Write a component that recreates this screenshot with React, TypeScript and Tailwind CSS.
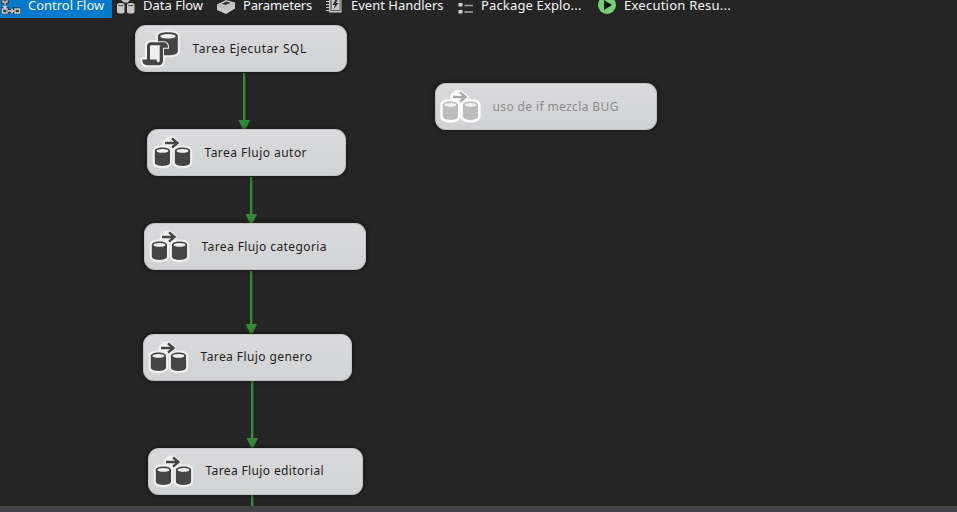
import type { ReactNode } from "react";

function Cylinder({ x, y, body }: { x: number; y: number; body: string }) {
  return (
    <g transform={`translate(${x} ${y})`}>
      <path d="M0 3.2C0 1.4 3 0 7.6 0s7.6 1.4 7.6 3.2v12c0 1.9-3 3.4-7.6 3.4S0 17.1 0 15.2z" fill={body} />
      <ellipse cx="7.6" cy="3.5" rx="5.9" ry="1.9" fill="#f1f1f2" />
    </g>
  );
}

function FlowIcon({ disabled }: { disabled?: boolean }) {
  const body = disabled ? "#bdbdbe" : "#454545";
  const halo = disabled ? "#ffffff" : "#f0f0f1";
  return (
    <svg width="48" height="47" viewBox="0 0 48 47" className="shrink-0">
      <g fill={halo} stroke={halo} strokeWidth={disabled ? 4.8 : 4.2} strokeLinejoin="round">
        <path d="M7.800 21.500c0-1.800 3-3 7.600-3s7.600 1.200 7.600 3v12.300c0 2-3.500 3.300-7.600 3.300s-7.600-1.300-7.600-3.300z" />
        <path d="M27.900 21.500c0-1.800 3-3 7.600-3s7.600 1.200 7.600 3v12.300c0 2-3.500 3.300-7.600 3.300s-7.600-1.300-7.600-3.300z" />
        <path d="M18 12.500h5l-2-3h4l6 4.800-5.500 4.700h-4l-4-3z" />
      </g>
      <Cylinder x={7.8} y={18.4} body={body} />
      <Cylinder x={27.9} y={18.4} body={body} />
      <path d="M18 14h12.500M25 9.300l5.500 4.700-5.500 4.700" fill="none" stroke={disabled ? "#aaaaab" : "#454545"} strokeWidth="2.400" />
    </svg>
  );
}

function SqlIcon() {
  const roll = "M12 34.500V21.500c0-2.800 1.600-4.300 4.200-4.300h13c2.500 0 3.800 1.800 3.800 5.600h-5V35.500c0 3-1.600 4.700-4.400 4.700H12.500c-3.500 0-5.200-2-5.200-5.700z";
  return (
    <svg width="48" height="47" viewBox="0 0 48 47" className="shrink-0">
      <g fill="#f0f0f1" stroke="#f0f0f1" strokeWidth="4.200" strokeLinejoin="round">
        <path d="M23 11c0-2.400 4-3.700 9.900-3.700s9.900 1.300 9.900 3.700v15.500c0 2.400-4 3.700-9.900 3.700H23z" />
        <path d={roll} />
      </g>
      <path d="M23 11c0-2.400 4-3.700 9.900-3.700s9.900 1.300 9.900 3.700v15.500c0 2.400-4 3.700-9.900 3.700H23z" fill="#454545" />
      <ellipse cx="32.900" cy="11.300" rx="7.700" ry="2.300" fill="#f1f1f2" />
      <path d={roll} fill="none" stroke="#f0f0f1" strokeWidth="2" />
      <path d={roll} fill="#454545" />
      <path d="M15 34.500V22c0-1.100.6-1.700 1.600-1.700h8.800c-.5.700-.7 1.500-.7 2.500v12.500c0 1.300-.5 2-1.500 2s-1.500-1-1.500-2.800z" fill="#f0f0f1" />
    </svg>
  );
}

interface TaskProps {
  label: string;
  place: string;
  tracking: string;
  icon?: ReactNode;
  disabled?: boolean;
}

function Task({ label, place, tracking, icon, disabled }: TaskProps) {
  return (
    <div
      className={`absolute flex h-[47px] items-center rounded-[11px] bg-linear-to-b from-[#dadadd] to-[#d0d2d4] shadow-[0_0_4px_1px_rgba(0,0,0,0.4),inset_0_0_0_1px_rgba(150,150,155,0.3)] ${place}`}
    >
      {icon ?? <FlowIcon disabled={disabled} />}
      <span className={`ml-[9.500px] whitespace-nowrap text-[12px] leading-4 ${tracking} ${disabled ? "text-[#8c8c8e]" : "text-[#1e1e1e]"}`}>
        {label}
      </span>
    </div>
  );
}

const links = [
  { x: 244, from: 73, to: 129.5 },
  { x: 251, from: 177, to: 223.5 },
  { x: 251, from: 271, to: 333.5 },
  { x: 252, from: 381, to: 447.5 },
];

function Tab({ width, icon, label, active, tracking }: { width: string; icon: ReactNode; label: string; active?: boolean; tracking: string }) {
  return (
    <div className={`flex h-[18px] shrink-0 items-start ${width} ${active ? "bg-[#007acc]" : ""}`}>
      <span className="w-7 shrink-0">{icon}</span>
      <span className={`whitespace-nowrap text-[13px] leading-[10px] text-[#f4f4f4] ${tracking}`}>{label}</span>
    </div>
  );
}

function TabIcon({ children }: { children: ReactNode }) {
  return <svg width="28" height="18" viewBox="0 0 28 18">{children}</svg>;
}

export default function App() {
  return (
    <main className="flex h-[512px] w-[957px] flex-col overflow-hidden bg-[#252525] font-['Noto_Sans',sans-serif]">
      <nav className="flex h-[18px] shrink-0">
        <Tab width="mr-[3px] w-[112px]" active label="Control Flow" tracking="tracking-[-0.02px]" icon={
          <TabIcon>
            <g fill="none" stroke="#333b42" strokeWidth="3.400"><path d="M3-1h4v3H3zM3 9h4v3.500H3zM14.500 9h4v3.500h-4zM5 2v7M7 11h7" /></g>
            <g fill="none" stroke="#cdcdcd" strokeWidth="1.300"><path d="M3-1h4v3H3zM2.500 9H7v4H2.500zM15 9h4.500v4H15zM5 3v5M3 6l2 2 2-2M8 11h6M11.500 9l2 2-2 2" /></g>
          </TabIcon>
        } />
        <Tab width="w-[100px]" label="Data Flow" tracking="tracking-[0px]" icon={
          <TabIcon>
            <g fill="#c6c6c6">
              <path d="M2 4.500C2 2.500 9.500 2.500 9.500 4.500V12c0 2-7.500 2-7.500 0zM12 4.500c0-2 7.500-2 7.500 0V12c0 2-7.500 2-7.500 0z" />
              <path d="M6 0h9l-3 3-1-1-1 1z" />
            </g>
            <path d="M3.200 5c1 .9 4 .9 5 0M13.200 5c1 .9 4 .9 5 0" fill="none" stroke="#343434" />
          </TabIcon>
        } />
        <Tab width="w-[108px]" label="Parameters" tracking="tracking-[-0.15px]" icon={
          <TabIcon>
            <path d="M2 4.500L11 0l9 2.500v6l-9 5.500-9-4z" fill="#c8c8c8" />
            <path d="M6.500 3.700l5-2.200 4 1.300-5 2.200z" fill="#333" />
            <path d="M2.500 5l7.500 3 9.500-5" fill="none" stroke="#aaa" strokeWidth=".8" />
          </TabIcon>
        } />
        <Tab width="w-[130px]" label="Event Handlers" tracking="tracking-[0px]" icon={
          <TabIcon>
            <path d="M6-1h12.500v13.500H6z" fill="#c8c8c8" />
            <path d="M3 1.500h4M3 4.500h4M3 7.500h4M3 10.500h4" stroke="#c8c8c8" strokeWidth="1.200" />
            <path d="M8 0v11" stroke="#333" />
            <path d="M9 10.500h8V0" fill="none" stroke="#444" strokeWidth=".8" />
            <path d="M13-1L9.500 5H12l-1.500 4.500L15.500 3H13l2-4z" fill="#2b2b2b" />
          </TabIcon>
        } />
        <Tab width="w-[143px]" label="Package Explo..." tracking="tracking-[0.15px]" icon={
          <TabIcon>
            <path d="M5.500 3h4v3.500h-4zM5.500 10h4v3.500h-4z" fill="#d0d0d0" />
            <path d="M11.500 5.500h8.500M11.500 12h8.500" stroke="#a8a8a8" strokeWidth="1.300" />
          </TabIcon>
        } />
        <Tab width="w-[140px]" label="Execution Resu..." tracking="tracking-[0.24px]" icon={
          <TabIcon>
            <circle cx="11" cy="5" r="9" fill="#75d075" />
            <path d="M8 0v10l8-5z" fill="#101810" />
          </TabIcon>
        } />
      </nav>
      <section className="relative grow">
        <svg className="absolute inset-x-0 -top-[18px]" width="957" height="506" viewBox="0 0 957 506">
          {links.map((l) => (
            <g key={l.from} fill="#338a36">
              <path d={`M${l.x - 1} ${l.from}h2.400V${l.to - 8}h-2.400z`} />
              <path d={`M${l.x - 5.5} ${l.to - 9.5}h11.500l-4.500 9.500h-2.500z`} />
            </g>
          ))}
          <path d="M251 495h2.400v11H251z" fill="#338a36" />
        </svg>
        <Task place="left-[135px] top-[7px] w-[212px]" label="Tarea Ejecutar SQL" tracking="tracking-[0.52px]" icon={<SqlIcon />} />
        <Task place="left-[147px] top-[111px] w-[199px]" label="Tarea Flujo autor" tracking="tracking-[0.46px]" />
        <Task place="left-[144px] top-[205px] w-[222px]" label="Tarea Flujo categoria" tracking="tracking-[0.4px]" />
        <Task place="left-[143px] top-[315.500px] w-[209px]" label="Tarea Flujo genero" tracking="tracking-[0.42px]" />
        <Task place="left-[148px] top-[429.500px] w-[215px]" label="Tarea Flujo editorial" tracking="tracking-[0.37px]" />
        <Task place="left-[435px] top-[65px] w-[222px]" label="uso de if mezcla BUG" tracking="tracking-[0.38px]" disabled />
      </section>
      <footer className="h-[6px] shrink-0 bg-[#414349]" />
    </main>
  );
}
